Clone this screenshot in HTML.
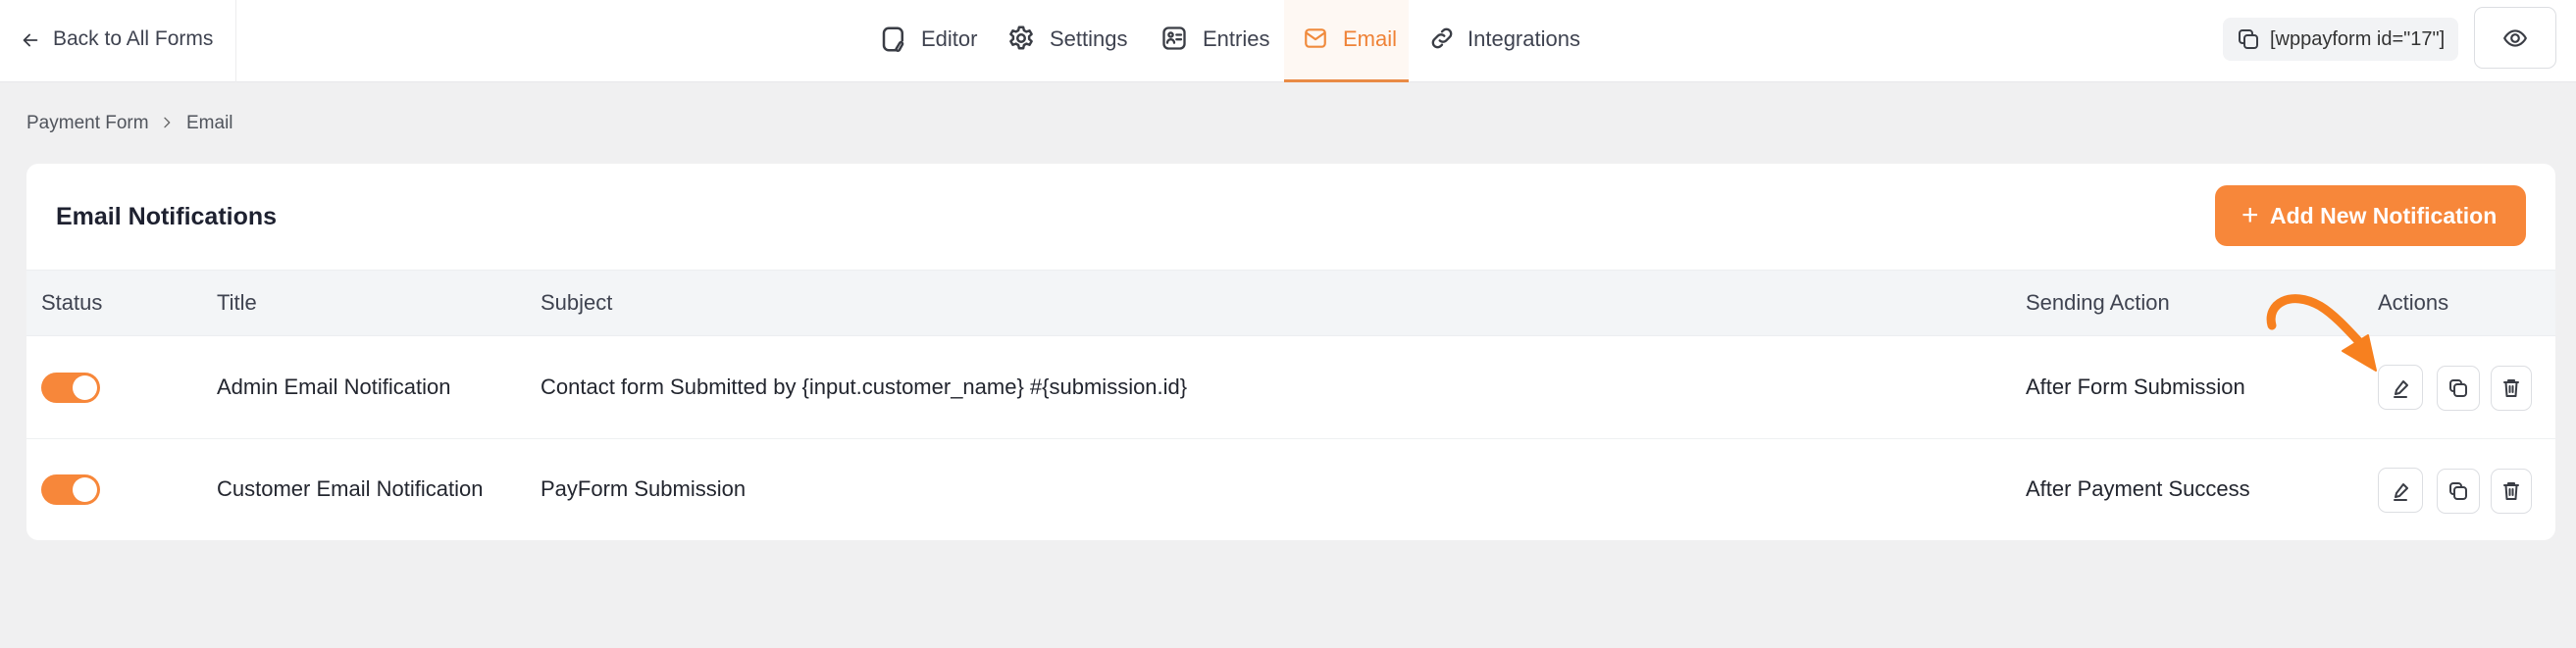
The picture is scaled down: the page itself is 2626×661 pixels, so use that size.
<!DOCTYPE html>
<html><head><meta charset="utf-8"><style>
*{box-sizing:border-box;margin:0;padding:0}
body{width:2626px;height:661px;background:#f0f0f1;font-family:"Liberation Sans",sans-serif;position:relative;overflow:hidden;color:#1f2937}
.hdr{position:absolute;left:0;top:0;width:2626px;height:84px;background:#fff;border-bottom:1px solid #e8e8ea}
.abs{position:absolute}
.t{position:absolute;font-size:22px;color:#3f4350;line-height:1;white-space:nowrap}
svg{position:absolute;fill:none;stroke:#3a3d45;stroke-width:2;stroke-linecap:round;stroke-linejoin:round}
.card{position:absolute;left:27px;top:167px;width:2578px;height:384px;background:#fff;border-radius:12px;overflow:hidden}
.btn{position:absolute;width:46px;height:46px;border:1px solid #dcdee2;border-radius:9px;background:#fff}
.tog{position:absolute;left:15px;width:60px;height:31px;border-radius:16px;background:#f7873a}
.tog:after{content:"";position:absolute;right:3px;top:3px;width:25px;height:25px;border-radius:50%;background:#fff}
</style></head><body>
<div class="hdr"></div>
<div class="abs" style="left:240px;top:0;width:1px;height:84px;background:#ececee"></div>
<svg style="left:20px;top:30px" width="22" height="22" viewBox="0 0 24 24"><path d="M19 12H5M11 6l-6 6 6 6"/></svg>
<div class="t" style="left:54px;top:29px;font-size:21px">Back to All Forms</div>

<svg style="left:896px;top:25px" width="30" height="30" viewBox="0 0 24 24"><path d="M8 3h7a4 4 0 0 1 4 4v6M14 21H8a4 4 0 0 1-4-4V7a4 4 0 0 1 4-4M17 15l-3 5a1.5 1.5 0 0 0 2.5 1l2.5-4.5a1 1 0 0 0-2-1.5z"/></svg>
<div class="t" style="left:939px;top:29px">Editor</div>
<svg style="left:1026px;top:24px" width="30" height="30" viewBox="0 0 24 24"><circle cx="12" cy="12" r="3"/><path d="M10.3 3h3.4l.6 2.6 2 1.1 2.5-.9 1.7 2.9-2 1.8v2.2l2 1.8-1.7 2.9-2.5-.9-2 1.1-.6 2.6h-3.4l-.6-2.6-2-1.1-2.5.9-1.7-2.9 2-1.8v-2.2l-2-1.8 1.7-2.9 2.5.9 2-1.1z"/></svg>
<div class="t" style="left:1070px;top:29px">Settings</div>
<svg style="left:1183px;top:25px" width="28" height="28" viewBox="0 0 24 24"><rect x="3" y="3" width="18" height="18" rx="4"/><circle cx="9" cy="9" r="1.8"/><path d="M6 16a3 3 0 0 1 6 0M14 9h4M14 13h4"/></svg>
<div class="t" style="left:1226px;top:29px">Entries</div>
<div class="abs" style="left:1309px;top:0;width:127px;height:84px;background:#fef8f3;border-bottom:3px solid #e98a45"></div>
<svg style="left:1328px;top:26px;stroke:#f08a3c" width="26" height="26" viewBox="0 0 24 24"><rect x="3" y="4" width="18" height="16" rx="3"/><path d="M3.5 7l8.5 6 8.5-6"/></svg>
<div class="t" style="left:1369px;top:29px;color:#ef8236">Email</div>
<svg style="left:1456px;top:25px" width="28" height="28" viewBox="0 0 24 24"><path d="M10 14a4 4 0 0 0 5.7 0l3-3a4 4 0 0 0-5.7-5.7l-1 1M14 10a4 4 0 0 0-5.7 0l-3 3a4 4 0 0 0 5.7 5.7l1-1"/></svg>
<div class="t" style="left:1496px;top:29px">Integrations</div>

<div class="abs" style="left:2266px;top:18px;width:240px;height:44px;background:#f2f3f5;border-radius:8px"></div>
<svg style="left:2280px;top:28px" width="24" height="24" viewBox="0 0 24 24"><rect x="8" y="8" width="13" height="13" rx="3"/><path d="M16 8V6a3 3 0 0 0-3-3H6a3 3 0 0 0-3 3v7a3 3 0 0 0 3 3h2"/></svg>
<div class="t" style="left:2314px;top:30px;font-size:20px;color:#333">[wppayform id="17"]</div>
<div class="abs" style="left:2522px;top:7px;width:84px;height:63px;border:1px solid #dcdee2;border-radius:9px;background:#fff"></div>
<svg style="left:2550px;top:26px" width="28" height="26" viewBox="0 0 24 24"><path d="M2 12s3.5-7 10-7 10 7 10 7-3.5 7-10 7S2 12 2 12z"/><circle cx="12" cy="12" r="3.5"/></svg>

<div class="t" style="left:27px;top:116px;font-size:19px;color:#50545c">Payment Form</div>
<svg style="left:162px;top:117px;stroke:#666" width="16" height="16" viewBox="0 0 24 24"><path d="M9 5l7 7-7 7"/></svg>
<div class="t" style="left:190px;top:116px;font-size:19px;color:#50545c">Email</div>

<div class="card">
 <div class="t" style="left:30px;top:42px;font-size:25px;font-weight:bold;color:#1e2130">Email Notifications</div>
 <div class="abs" style="left:2231px;top:22px;width:317px;height:62px;background:#f7873a;border-radius:12px"></div>
 <div class="t" style="left:2258px;top:38px;font-size:30px;color:#fff;font-weight:300">+</div>
 <div class="t" style="left:2287px;top:42px;font-size:23px;color:#fff;font-weight:bold">Add New Notification</div>
 <div class="abs" style="left:0;top:108px;width:2578px;height:68px;background:#f3f5f7;border-top:1px solid #eceef0;border-bottom:1px solid #eceef0"></div>
 <div class="t" style="left:15px;top:131px">Status</div>
 <div class="t" style="left:194px;top:131px">Title</div>
 <div class="t" style="left:524px;top:131px">Subject</div>
 <div class="t" style="left:2038px;top:131px">Sending Action</div>
 <div class="t" style="left:2397px;top:131px">Actions</div>
 <div class="abs" style="left:0;top:280px;width:2578px;height:1px;background:#eef0f2"></div>

 <div class="tog" style="top:213px"></div>
 <div class="t" style="left:194px;top:217px;color:#23262f">Admin Email Notification</div>
 <div class="t" style="left:524px;top:217px;color:#23262f">Contact form Submitted by {input.customer_name} #{submission.id}</div>
 <div class="t" style="left:2038px;top:217px;color:#23262f">After Form Submission</div>
 <div class="tog" style="top:317px"></div>
 <div class="t" style="left:194px;top:321px;color:#23262f">Customer Email Notification</div>
 <div class="t" style="left:524px;top:321px;color:#23262f">PayForm Submission</div>
 <div class="t" style="left:2038px;top:321px;color:#23262f">After Payment Success</div>
</div>

<div class="btn" style="left:2424px;top:372px"></div><div class="btn" style="left:2484px;top:373px;width:44px"></div><div class="btn" style="left:2539px;top:373px;width:42px"></div>
<div class="btn" style="left:2424px;top:477px"></div><div class="btn" style="left:2484px;top:478px;width:44px"></div><div class="btn" style="left:2539px;top:478px;width:42px"></div>
<svg style="left:2436px;top:384px" width="24" height="24" viewBox="0 0 24 24"><path d="M14 5l4 4-8 8-4 1 1-4zM5 21h12"/></svg>
<svg style="left:2494px;top:384px" width="24" height="24" viewBox="0 0 24 24"><rect x="8" y="8" width="12" height="12" rx="3"/><path d="M15 8V7a3 3 0 0 0-3-3H7a3 3 0 0 0-3 3v5a3 3 0 0 0 3 3h1"/></svg>
<svg style="left:2548px;top:384px" width="24" height="24" viewBox="0 0 24 24"><path d="M5 6h14M9 6V4h6v2M6.5 6l1 14h9l1-14M10.5 10v6M13.5 10v6"/></svg>
<svg style="left:2436px;top:489px" width="24" height="24" viewBox="0 0 24 24"><path d="M14 5l4 4-8 8-4 1 1-4zM5 21h12"/></svg>
<svg style="left:2494px;top:489px" width="24" height="24" viewBox="0 0 24 24"><rect x="8" y="8" width="12" height="12" rx="3"/><path d="M15 8V7a3 3 0 0 0-3-3H7a3 3 0 0 0-3 3v5a3 3 0 0 0 3 3h1"/></svg>
<svg style="left:2548px;top:489px" width="24" height="24" viewBox="0 0 24 24"><path d="M5 6h14M9 6V4h6v2M6.5 6l1 14h9l1-14M10.5 10v6M13.5 10v6"/></svg>

<svg style="left:2300px;top:290px;stroke:#f7801f;stroke-width:9" width="140" height="100" viewBox="0 0 140 100"><path d="M16 42C10 20 35 5 65 22C80 31 95 48 108 62" fill="none"/><path d="M88 68L122 88L114 52Z" fill="#f7801f" stroke-width="2"/></svg>
</body></html>
